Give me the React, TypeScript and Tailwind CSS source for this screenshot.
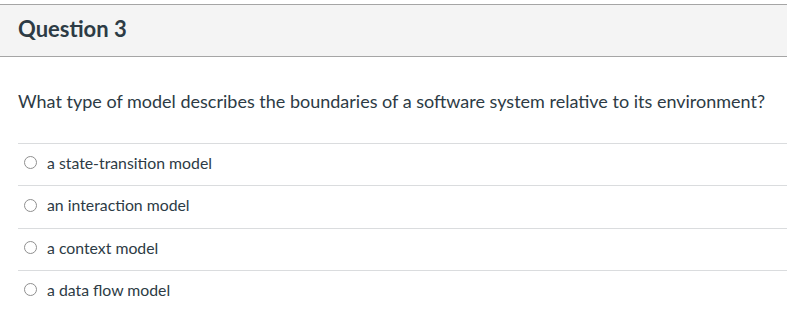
const options = [
  'a state-transition model',
  'an interaction model',
  'a context model',
  'a data flow model',
];

export default function App() {
  return (
    <div className="min-h-screen bg-white pt-1 font-['Lato',sans-serif] text-[#2d3b45]">
      <div className="flex h-[53px] items-center border-y border-[#a5a5a5] bg-[#f4f4f4] px-[18px] pb-[4px]">
        <h2 className="text-[22px] font-bold">Question 3</h2>
      </div>
      <div className="pl-[18px]">
        <p className="pt-[32px] pb-[30px] text-[18px] leading-[24px]">
          What type of model describes the boundaries of a software system relative to its environment?
        </p>
        <div>
          {options.map((option) => (
            <label
              key={option}
              className="flex h-[42.4px] items-center gap-[10px] border-t border-[#dadcde] pb-[4px] pl-[6px] text-[15.8px]"
            >
              <span className="h-[13px] w-[13px] rounded-full border border-[#8f8f8f] bg-white" />
              {option}
            </label>
          ))}
        </div>
      </div>
    </div>
  );
}
